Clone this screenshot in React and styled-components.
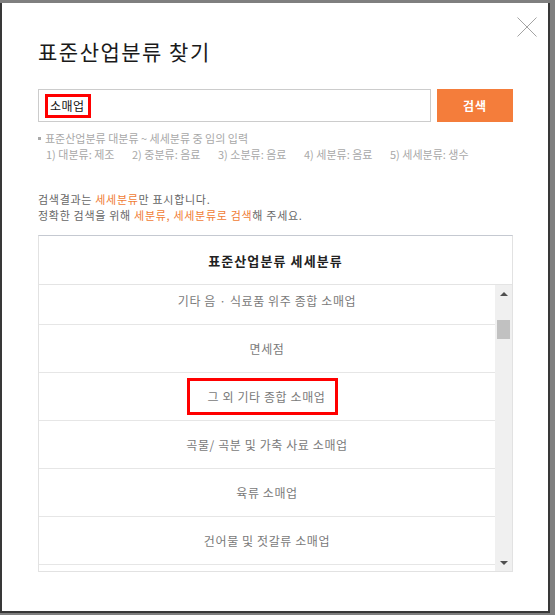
import styled, { createGlobalStyle } from "styled-components";

const GlobalStyle = createGlobalStyle`
  html, body {
    margin: 0;
    padding: 0;
    background: #7f7f7f;
  }
  body {
    padding-top: 3px;
    font-family: "Noto Sans CJK KR", "Noto Sans", sans-serif;
  }
`;

const Modal = styled.div`
  position: relative;
  width: 550px;
  height: 610px;
  box-sizing: border-box;
  background: #fff;
  border: 2px solid #383838;
  border-top: none;
  padding: 36px 35px 0 36px;
`;

const CloseButton = styled.button`
  position: absolute;
  top: 14px;
  right: 11px;
  width: 20px;
  height: 20px;
  padding: 0;
  border: none;
  background: none;
  cursor: pointer;
`;

const Title = styled.h1`
  margin: 0;
  font-size: 21px;
  line-height: 24px;
  font-weight: normal;
  letter-spacing: 1.5px;
  color: #1a1a1a;
`;

const SearchRow = styled.div`
  display: flex;
  gap: 6px;
  margin-top: 26px;
  height: 33px;
`;

const SearchField = styled.div`
  flex: 1;
  display: flex;
  align-items: center;
  box-sizing: border-box;
  border: 1px solid #cccccc;
  padding-left: 6px;
`;

const Highlight = styled.span`
  display: inline-flex;
  align-items: center;
  box-sizing: border-box;
  height: ${(p) => p.$h}px;
  border: 3px solid #ff0000;
  padding: ${(p) => p.$pad};
  margin-right: ${(p) => p.$shift || 0}px;
`;

const FieldText = styled.span`
  font-size: 12px;
  letter-spacing: 0.5px;
  color: #111;
`;

const SearchButton = styled.button`
  width: 76px;
  border: none;
  background: #f47d3b;
  color: #fff;
  font-family: inherit;
  font-size: 12px;
  font-weight: bold;
  letter-spacing: 1px;
  cursor: pointer;
`;

const Hint = styled.div`
  margin-top: 8px;
  font-size: 11px;
  line-height: 16px;
  color: #a8a8a8;
`;

const HintLine = styled.div`
  display: flex;
  align-items: center;
`;

const Bullet = styled.span`
  width: 3px;
  height: 3px;
  background: #aaa;
  margin-right: 4px;
`;

const Examples = styled.div`
  display: flex;
  padding-left: 8px;
`;

const Example = styled.span`
  min-width: 86px;
`;

const Notice = styled.div`
  margin-top: 29px;
  font-size: 11px;
  line-height: 16px;
  letter-spacing: 0.7px;
  color: #666;
`;

const Accent = styled.span`
  color: #f07c35;
`;

const Table = styled.div`
  margin-top: 12px;
  border: 1px solid #e2e2e2;
  border-top-color: #c5c9d1;
`;

const TableHead = styled.div`
  height: 49px;
  box-sizing: border-box;
  border-bottom: 1px solid #e4e4e4;
  display: flex;
  align-items: center;
  justify-content: center;
  font-size: 13px;
  font-weight: bold;
  letter-spacing: 1.1px;
  color: #222;
`;

const TableBody = styled.div`
  display: flex;
  height: 286px;
`;

const List = styled.div`
  flex: 1;
  overflow: hidden;
`;

const Rows = styled.div`
  margin-top: -8px;
`;

const Row = styled.div`
  height: 48px;
  box-sizing: border-box;
  border-bottom: 1px solid #e6e6e6;
  display: flex;
  align-items: center;
  justify-content: center;
  font-size: 12px;
  letter-spacing: 0.6px;
  color: #7a7a7a;
`;

const Scrollbar = styled.div`
  width: 17px;
  background: #f0f0f0;
  display: flex;
  flex-direction: column;
`;

const ArrowButton = styled.div`
  height: 17px;
  display: flex;
  align-items: center;
  justify-content: center;
`;

const Triangle = styled.span`
  width: 0;
  height: 0;
  border-left: 4px solid transparent;
  border-right: 4px solid transparent;
  ${(p) =>
    p.$down ? "border-top: 4px solid #505050;" : "border-bottom: 4px solid #505050;"}
`;

const Thumb = styled.div`
  margin: 18px 2px 0;
  height: 19px;
  background: #c1c1c1;
`;

const Track = styled.div`
  flex: 1;
`;

const rows = [
  "기타 음 · 식료품 위주 종합 소매업",
  "면세점",
  "그 외 기타 종합 소매업",
  "곡물/ 곡분 및 가축 사료 소매업",
  "육류 소매업",
  "건어물 및 젓갈류 소매업",
];

export default function App() {
  return (
    <>
      <GlobalStyle />
      <Modal>
        <CloseButton aria-label="닫기">
          <svg width="20" height="20" viewBox="0 0 20 20">
            <path d="M0.5 0.5L19.5 19.5M19.5 0.5L0.5 19.5" stroke="#a3a3a3" strokeWidth="1" fill="none" />
          </svg>
        </CloseButton>
        <Title>표준산업분류 찾기</Title>
        <SearchRow>
          <SearchField>
            <Highlight $h={24} $pad="0 3px 0 2px">
              <FieldText>소매업</FieldText>
            </Highlight>
          </SearchField>
          <SearchButton>검색</SearchButton>
        </SearchRow>
        <Hint>
          <HintLine>
            <Bullet />
            표준산업분류 대분류 ~ 세세분류 중 임의 입력
          </HintLine>
          <Examples>
            <Example>1) 대분류: 제조</Example>
            <Example>2) 중분류: 음료</Example>
            <Example>3) 소분류: 음료</Example>
            <Example>4) 세분류: 음료</Example>
            <Example>5) 세세분류: 생수</Example>
          </Examples>
        </Hint>
        <Notice>
          <div>
            검색결과는 <Accent>세세분류</Accent>만 표시합니다.
          </div>
          <div>
            정확한 검색을 위해 <Accent>세분류, 세세분류로 검색</Accent>해 주세요.
          </div>
        </Notice>
        <Table>
          <TableHead>표준산업분류 세세분류</TableHead>
          <TableBody>
            <List>
              <Rows>
                {rows.map((name, i) => (
                  <Row key={name}>
                    {i === 2 ? (
                      <Highlight $h={37} $pad="0 10px 0 18px" $shift={9}>
                        {name}
                      </Highlight>
                    ) : (
                      name
                    )}
                  </Row>
                ))}
                <Row />
              </Rows>
            </List>
            <Scrollbar>
              <ArrowButton>
                <Triangle />
              </ArrowButton>
              <Thumb />
              <Track />
              <ArrowButton>
                <Triangle $down />
              </ArrowButton>
            </Scrollbar>
          </TableBody>
        </Table>
      </Modal>
    </>
  );
}
